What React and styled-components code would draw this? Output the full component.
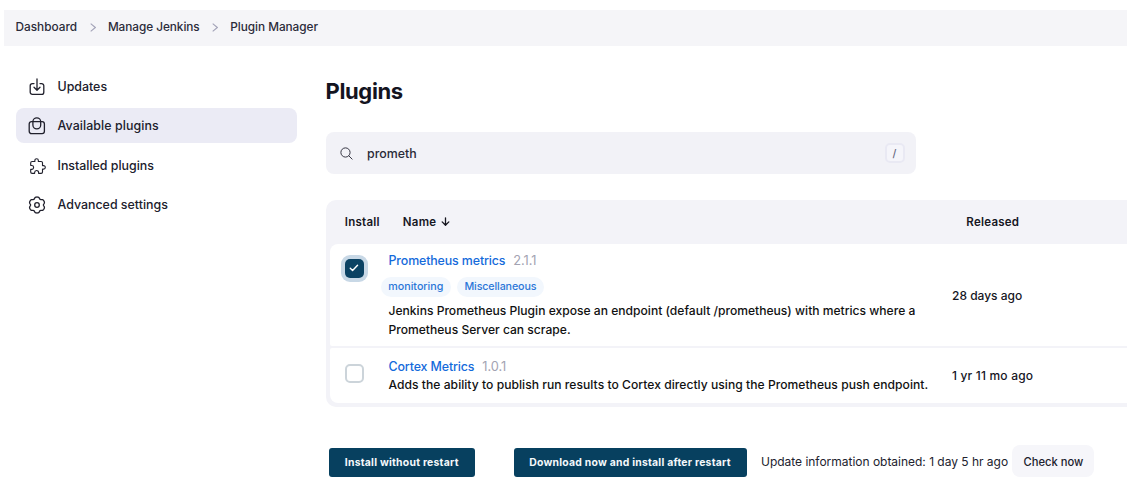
import React from "react";
import styled, { createGlobalStyle } from "styled-components";
import { IoExtensionPuzzleOutline, IoSearchOutline } from "react-icons/io5";

const Global = createGlobalStyle`
  *, *::before, *::after { box-sizing: border-box; }
  body {
    margin: 0;
    background: #fff;
    color: #16161f;
    font-family: Inter, "Liberation Sans", sans-serif;
    font-size: 12px;
    font-weight: 500;
    overflow: hidden;
  }
`;

const Page = styled.div`
  width: 1127px;
  height: 500px;
  padding: 10px 0 0 4px;
  overflow: hidden;
`;

const Breadcrumbs = styled.nav`
  display: flex;
  align-items: center;
  height: 36px;
  padding: 0 0 2px 11.5px;
  background: #f5f5f8;
  color: #2b2b3a;
`;

const Crumb = styled.span`
  width: ${(p) => p.$width}px;
  white-space: nowrap;
  font-size: 11.8px;
  letter-spacing: ${(p) => p.$track || 0}px;
`;

const Separator = styled.svg`
  width: 6px;
  height: 9px;
  margin: 0 12.3px 0 12.6px;
  fill: none;
  stroke: #a3a3b8;
  stroke-width: 1.1;
`;

const Body = styled.div`
  display: flex;
`;

const Sidebar = styled.aside`
  display: flex;
  flex-direction: column;
  gap: 4.4px;
  width: 281.5px;
  margin: 22.5px 28.5px 0 11.5px;
  flex: none;
`;

const NavItem = styled.a`
  display: flex;
  align-items: center;
  gap: 11.5px;
  height: 35px;
  padding: 2px 0 0 12.5px;
  border-radius: 8px;
  background: ${(p) => (p.$active ? "#ebebf5" : "transparent")};
  color: #20202c;
  font-size: 12.4px;
  line-height: 16px;
  letter-spacing: ${(p) => p.$track || 0}px;
  white-space: nowrap;

  svg {
    width: 18px;
    height: 18px;
    flex: none;
  }
`;

const LineIcon = styled.svg`
  fill: none;
  stroke: currentColor;
  stroke-width: 1.3;
  stroke-linecap: round;
  stroke-linejoin: round;
`;

const PuzzleIcon = styled(IoExtensionPuzzleOutline)`
  transform: translateX(1px);
`;

const Main = styled.main`
  flex: 1;
  min-width: 0;
`;

const Title = styled.h1`
  margin: 31px 0 0;
  font-size: 22px;
  line-height: 28px;
  font-weight: 700;
  letter-spacing: -0.35px;
  color: #14141f;
`;

const SearchBar = styled.div`
  display: flex;
  align-items: center;
  width: 590.5px;
  height: 42px;
  margin-top: 27px;
  padding: 0 11.5px 0 13px;
  border-radius: 8px;
  background: #f2f2f7;
  color: #2a2a38;
  font-size: 12.4px;

  svg {
    width: 15px;
    height: 15px;
    margin-right: 13.5px;
  }
`;

const Key = styled.kbd`
  display: flex;
  align-items: center;
  justify-content: center;
  width: 20px;
  height: 20px;
  margin-left: auto;
  border: 2px solid #e9e9f3;
  border-radius: 5px;
  background: #f5f5fa;
  color: #66667c;
  font-family: inherit;
  font-size: 10.5px;
`;

const Table = styled.section`
  width: 820px;
  height: 207px;
  margin-top: 26px;
  padding: 0 4px 4px;
  border-radius: 10px;
  background: #f3f3f8;
`;

const TableHead = styled.header`
  display: flex;
  align-items: center;
  height: 43.5px;
  padding-left: 15.3px;
  font-size: 11.5px;
  font-weight: 600;
  letter-spacing: 0.25px;
`;

const HeadCell = styled.span`
  display: flex;
  align-items: center;
  gap: 5px;
  width: ${(p) => p.$width}px;
  white-space: nowrap;
`;

const ArrowDown = styled(LineIcon)`
  width: 9px;
  height: 9px;
`;

const Row = styled.div`
  display: flex;
  height: ${(p) => p.$height}px;
  padding-left: 15px;
  margin-bottom: 2.5px;
  border-radius: ${(p) => (p.$first ? "8px 8px 2px 2px" : "2px 2px 8px 8px")};
  background: #fff;
`;

const Checkbox = styled.span`
  display: flex;
  align-items: center;
  justify-content: center;
  flex: none;
  width: 19px;
  height: 19px;
  margin: ${(p) => p.$top}px 25px 0 0;
  border-radius: 5px;
  border: ${(p) => (p.$checked ? "0" : "2px solid #ccd4da")};
  background: ${(p) => (p.$checked ? "#0b4263" : "#fff")};
  box-shadow: ${(p) => (p.$checked ? "0 0 0 4px #c8d8e6" : "none")};
`;

const Details = styled.div`
  width: 563.5px;
  flex: none;
  padding-top: ${(p) => p.$top}px;
`;

const Heading = styled.div`
  display: flex;
  gap: 7.8px;
  font-size: 12.4px;
  line-height: 18px;
`;

const PluginLink = styled.a`
  color: #146adb;
  letter-spacing: -0.12px;
`;

const Version = styled.span`
  color: #a3a3b2;
  font-size: 12.8px;
  font-weight: 400;
`;

const Tags = styled.div`
  display: flex;
  gap: 6.5px;
  margin: 7px 0 5.5px -7.5px;
`;

const Tag = styled.a`
  height: 20px;
  padding: 0 7.3px;
  border-radius: 10px;
  background: #f2f7fd;
  color: #2a76d8;
  font-size: 10.7px;
  line-height: 20px;
  letter-spacing: ${(p) => p.$track || 0}px;
`;

const Description = styled.p`
  margin: 0;
  font-size: 12.1px;
  line-height: 18.6px;
  letter-spacing: ${(p) => p.$track || 0}px;
  color: #111;
  white-space: nowrap;
`;

const Released = styled.span`
  align-self: center;
  padding-top: ${(p) => p.$shift}px;
  font-size: 12px;
  letter-spacing: ${(p) => p.$track || 0}px;
  white-space: nowrap;
`;

const Footer = styled.footer`
  display: flex;
  align-items: center;
  margin: 38px 0 0 3px;
`;

const PrimaryButton = styled.button`
  width: ${(p) => p.$width}px;
  height: 28.5px;
  margin: 3px ${(p) => p.$gap}px 0 0;
  padding: 0;
  border: 0;
  border-radius: 3px;
  background: #07405f;
  color: #f4f8fb;
  font-family: inherit;
  font-size: 10.4px;
  font-weight: 700;
  letter-spacing: 0.24px;
  white-space: nowrap;
`;

const UpdateInfo = styled.span`
  width: 251px;
  font-size: 12px;
  font-weight: 400;
  letter-spacing: -0.02px;
  color: #22222e;
  white-space: nowrap;
`;

const CheckButton = styled.button`
  width: 82px;
  height: 32px;
  padding: 1.5px 0 0 1px;
  border: 0;
  border-radius: 8px;
  background: #f6f6fa;
  color: #20202c;
  font-family: inherit;
  font-size: 11.2px;
  font-weight: 500;
`;

const Chevron = () => (
  <Separator viewBox="0 0 6 9">
    <path d="M.7.7 5.3 4.5.7 8.3" />
  </Separator>
);

const DownloadIcon = () => (
  <LineIcon viewBox="0 0 18 18">
    <path d="M6 5.6H4.4a2.2 2.2 0 0 0-2.200 2.200v6.400a2.200 2.200 0 0 0 2.200 2.200h9.200a2.200 2.200 0 0 0 2.200-2.200V7.800a2.200 2.200 0 0 0-2.200-2.200H12M9 1v11M6 9.200l3 3 3-3" />
  </LineIcon>
);

const BagIcon = () => (
  <LineIcon viewBox="0 0 18 18">
    <rect x="1.2" y="4.6" width="15.2" height="12" rx="2.3" />
    <path d="M4.9 8V4.7a3.9 3.9 0 0 1 7.8 0V8a3.9 3.9 0 0 1-7.8 0z" />
  </LineIcon>
);

const gearPoints = Array.from({ length: 72 }, (_, i) => {
  const angle = (i / 72) * Math.PI * 2;
  const radius = 7.4 + 0.8 * Math.cos(6 * angle) - 0.22 * Math.cos(12 * angle);
  return `${(9 + radius * Math.sin(angle)).toFixed(2)},${(9 - radius * Math.cos(angle)).toFixed(2)}`;
}).join(" ");

const GearIcon = () => (
  <LineIcon viewBox="0 0 18 18">
    <polygon points={gearPoints} />
    <circle cx="9" cy="9" r="2.3" />
  </LineIcon>
);

export default function App() {
  return (
    <Page>
      <Global />
      <Breadcrumbs>
        <Crumb $width={61.5}>Dashboard</Crumb>
        <Chevron />
        <Crumb $width={91.5} $track={-0.05}>Manage Jenkins</Crumb>
        <Chevron />
        <Crumb $width={90} $track={-0.04}>Plugin Manager</Crumb>
      </Breadcrumbs>
      <Body>
        <Sidebar>
          <NavItem><DownloadIcon />Updates</NavItem>
          <NavItem $active $track={0.08}><BagIcon />Available plugins</NavItem>
          <NavItem><PuzzleIcon />Installed plugins</NavItem>
          <NavItem><GearIcon />Advanced settings</NavItem>
        </Sidebar>
        <Main>
          <Title>Plugins</Title>
          <SearchBar>
            <IoSearchOutline />
            prometh
            <Key>/</Key>
          </SearchBar>
          <Table>
            <TableHead>
              <HeadCell $width={58}>Install</HeadCell>
              <HeadCell $width={563.5}>
                Name
                <ArrowDown viewBox="0 0 9 9">
                  <path d="M4.5.8V8M1.2 4.9 4.5 8.2 7.8 4.9" />
                </ArrowDown>
              </HeadCell>
              <HeadCell $width={60}>Released</HeadCell>
            </TableHead>
            <Row $height={102} $first>
              <Checkbox $checked $top={15}>
                <svg width="10" height="8" viewBox="0 0 11 9" fill="none" stroke="#fff" strokeWidth="1.6" strokeLinecap="round" strokeLinejoin="round">
                  <path d="M1.3 4.8 3.9 7.3 9.5 1.3" />
                </svg>
              </Checkbox>
              <Details $top={8}>
                <Heading>
                  <PluginLink>Prometheus metrics</PluginLink>
                  <Version>2.1.1</Version>
                </Heading>
                <Tags>
                  <Tag>monitoring</Tag>
                  <Tag $track={-0.12}>Miscellaneous</Tag>
                </Tags>
                <Description>
                  Jenkins Prometheus Plugin expose an endpoint (default /prometheus) with metrics where a
                  <br />
                  Prometheus Server can scrape.
                </Description>
              </Details>
              <Released $shift={1}>28 days ago</Released>
            </Row>
            <Row $height={55}>
              <Checkbox $top={15.5} />
              <Details $top={9.5}>
                <Heading>
                  <PluginLink>Cortex Metrics</PluginLink>
                  <Version>1.0.1</Version>
                </Heading>
                <Description $track={0.035}>
                  Adds the ability to publish run results to Cortex directly using the Prometheus push endpoint.
                </Description>
              </Details>
              <Released $shift={0} $track={0.18}>1 yr 11 mo ago</Released>
            </Row>
          </Table>
          <Footer>
            <PrimaryButton $width={146.5} $gap={38.5}>Install without restart</PrimaryButton>
            <PrimaryButton $width={233} $gap={14.5}>Download now and install after restart</PrimaryButton>
            <UpdateInfo>Update information obtained: 1 day 5 hr ago</UpdateInfo>
            <CheckButton>Check now</CheckButton>
          </Footer>
        </Main>
      </Body>
    </Page>
  );
}
